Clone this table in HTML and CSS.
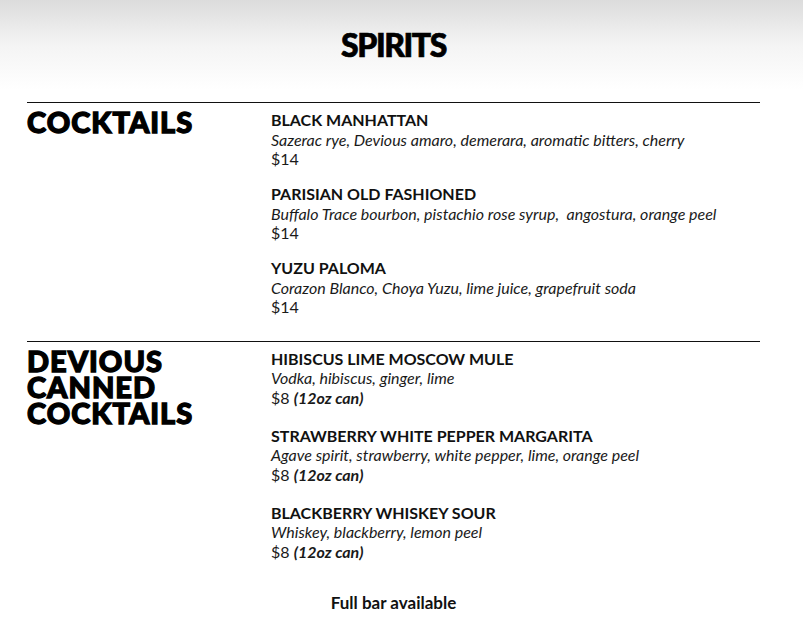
FILE: index.html
```html
<!DOCTYPE html>
<html>
<head>
<meta charset="utf-8">
<link rel="stylesheet" href="styles.css">
</head>
<body>
<div class="page">
  <h1 class="title">SPIRITS</h1>

  <section class="section">
    <h2 class="section-title">COCKTAILS</h2>
    <div class="items">
      <div class="item">
        <div class="name">BLACK MANHATTAN</div>
        <div class="desc">Sazerac rye, Devious amaro, demerara, aromatic bitters, cherry</div>
        <div class="price">$14</div>
      </div>
      <div class="item">
        <div class="name">PARISIAN OLD FASHIONED</div>
        <div class="desc">Buffalo Trace bourbon, pistachio rose syrup,&nbsp; angostura, orange peel</div>
        <div class="price">$14</div>
      </div>
      <div class="item">
        <div class="name">YUZU PALOMA</div>
        <div class="desc">Corazon Blanco, Choya Yuzu, lime juice, grapefruit soda</div>
        <div class="price">$14</div>
      </div>
    </div>
  </section>

  <section class="section">
    <h2 class="section-title">DEVIOUS<br>CANNED<br>COCKTAILS</h2>
    <div class="items canned">
      <div class="item">
        <div class="name">HIBISCUS LIME MOSCOW MULE</div>
        <div class="desc">Vodka, hibiscus, ginger, lime</div>
        <div class="price">$8 <em class="size">(12oz can)</em></div>
      </div>
      <div class="item">
        <div class="name">STRAWBERRY WHITE PEPPER MARGARITA</div>
        <div class="desc">Agave spirit, strawberry, white pepper, lime, orange peel</div>
        <div class="price">$8 <em class="size">(12oz can)</em></div>
      </div>
      <div class="item">
        <div class="name">BLACKBERRY WHISKEY SOUR</div>
        <div class="desc">Whiskey, blackberry, lemon peel</div>
        <div class="price">$8 <em class="size">(12oz can)</em></div>
      </div>
    </div>
  </section>

  <p class="footer">Full bar available</p>
</div>
</body>
</html>
```

FILE: styles.css
```css
html, body {
  margin: 0;
  padding: 0;
}
body {
  font-family: Lato, "Open Sans", sans-serif;
  color: #111;
  background: #fff linear-gradient(#dcdcdc 0px, #f4f4f4 45px, #ffffff 90px) no-repeat;
  background-size: 100% 95px;
  width: 803px;
  height: 627px;
  overflow: hidden;
}
.page {
  width: 733px;
  margin-left: 27px;
}
.title {
  margin: 0;
  padding-top: 26px;
  height: 102px;
  box-sizing: border-box;
  text-align: center;
  font-size: 32px;
  font-weight: 900;
  line-height: 1.2;
  letter-spacing: -1.4px;
  -webkit-text-stroke: 0.7px #000;
  color: #000;
}
.section {
  border-top: 1px solid #111;
  display: grid;
  grid-template-columns: 244px 1fr;
  padding-top: 7px;
}
.section-title {
  margin: -1px 0 0;
  font-size: 29px;
  font-weight: 900;
  line-height: 26px;
  letter-spacing: 1px;
  -webkit-text-stroke: 1.3px #000;
  padding-top: 0;
  color: #000;
}
.items {
  padding-bottom: 24px;
}
.item + .item {
  margin-top: 15.5px;
}
.canned .item + .item {
  margin-top: 18.5px;
}
.name {
  font-size: 16px;
  font-weight: 700;
  line-height: 19.5px;
  color: #111;
}
.desc {
  font-size: 16px;
  font-style: italic;
  line-height: 19.5px;
  color: #1a1a1a;
}
.price {
  font-size: 16px;
  line-height: 19.5px;
  color: #1a1a1a;
}
.size {
  font-weight: 700;
}
.footer {
  margin: 0;
  padding-top: 7px;
  text-align: center;
  font-size: 17px;
  font-weight: 700;
  color: #111;
}
```
